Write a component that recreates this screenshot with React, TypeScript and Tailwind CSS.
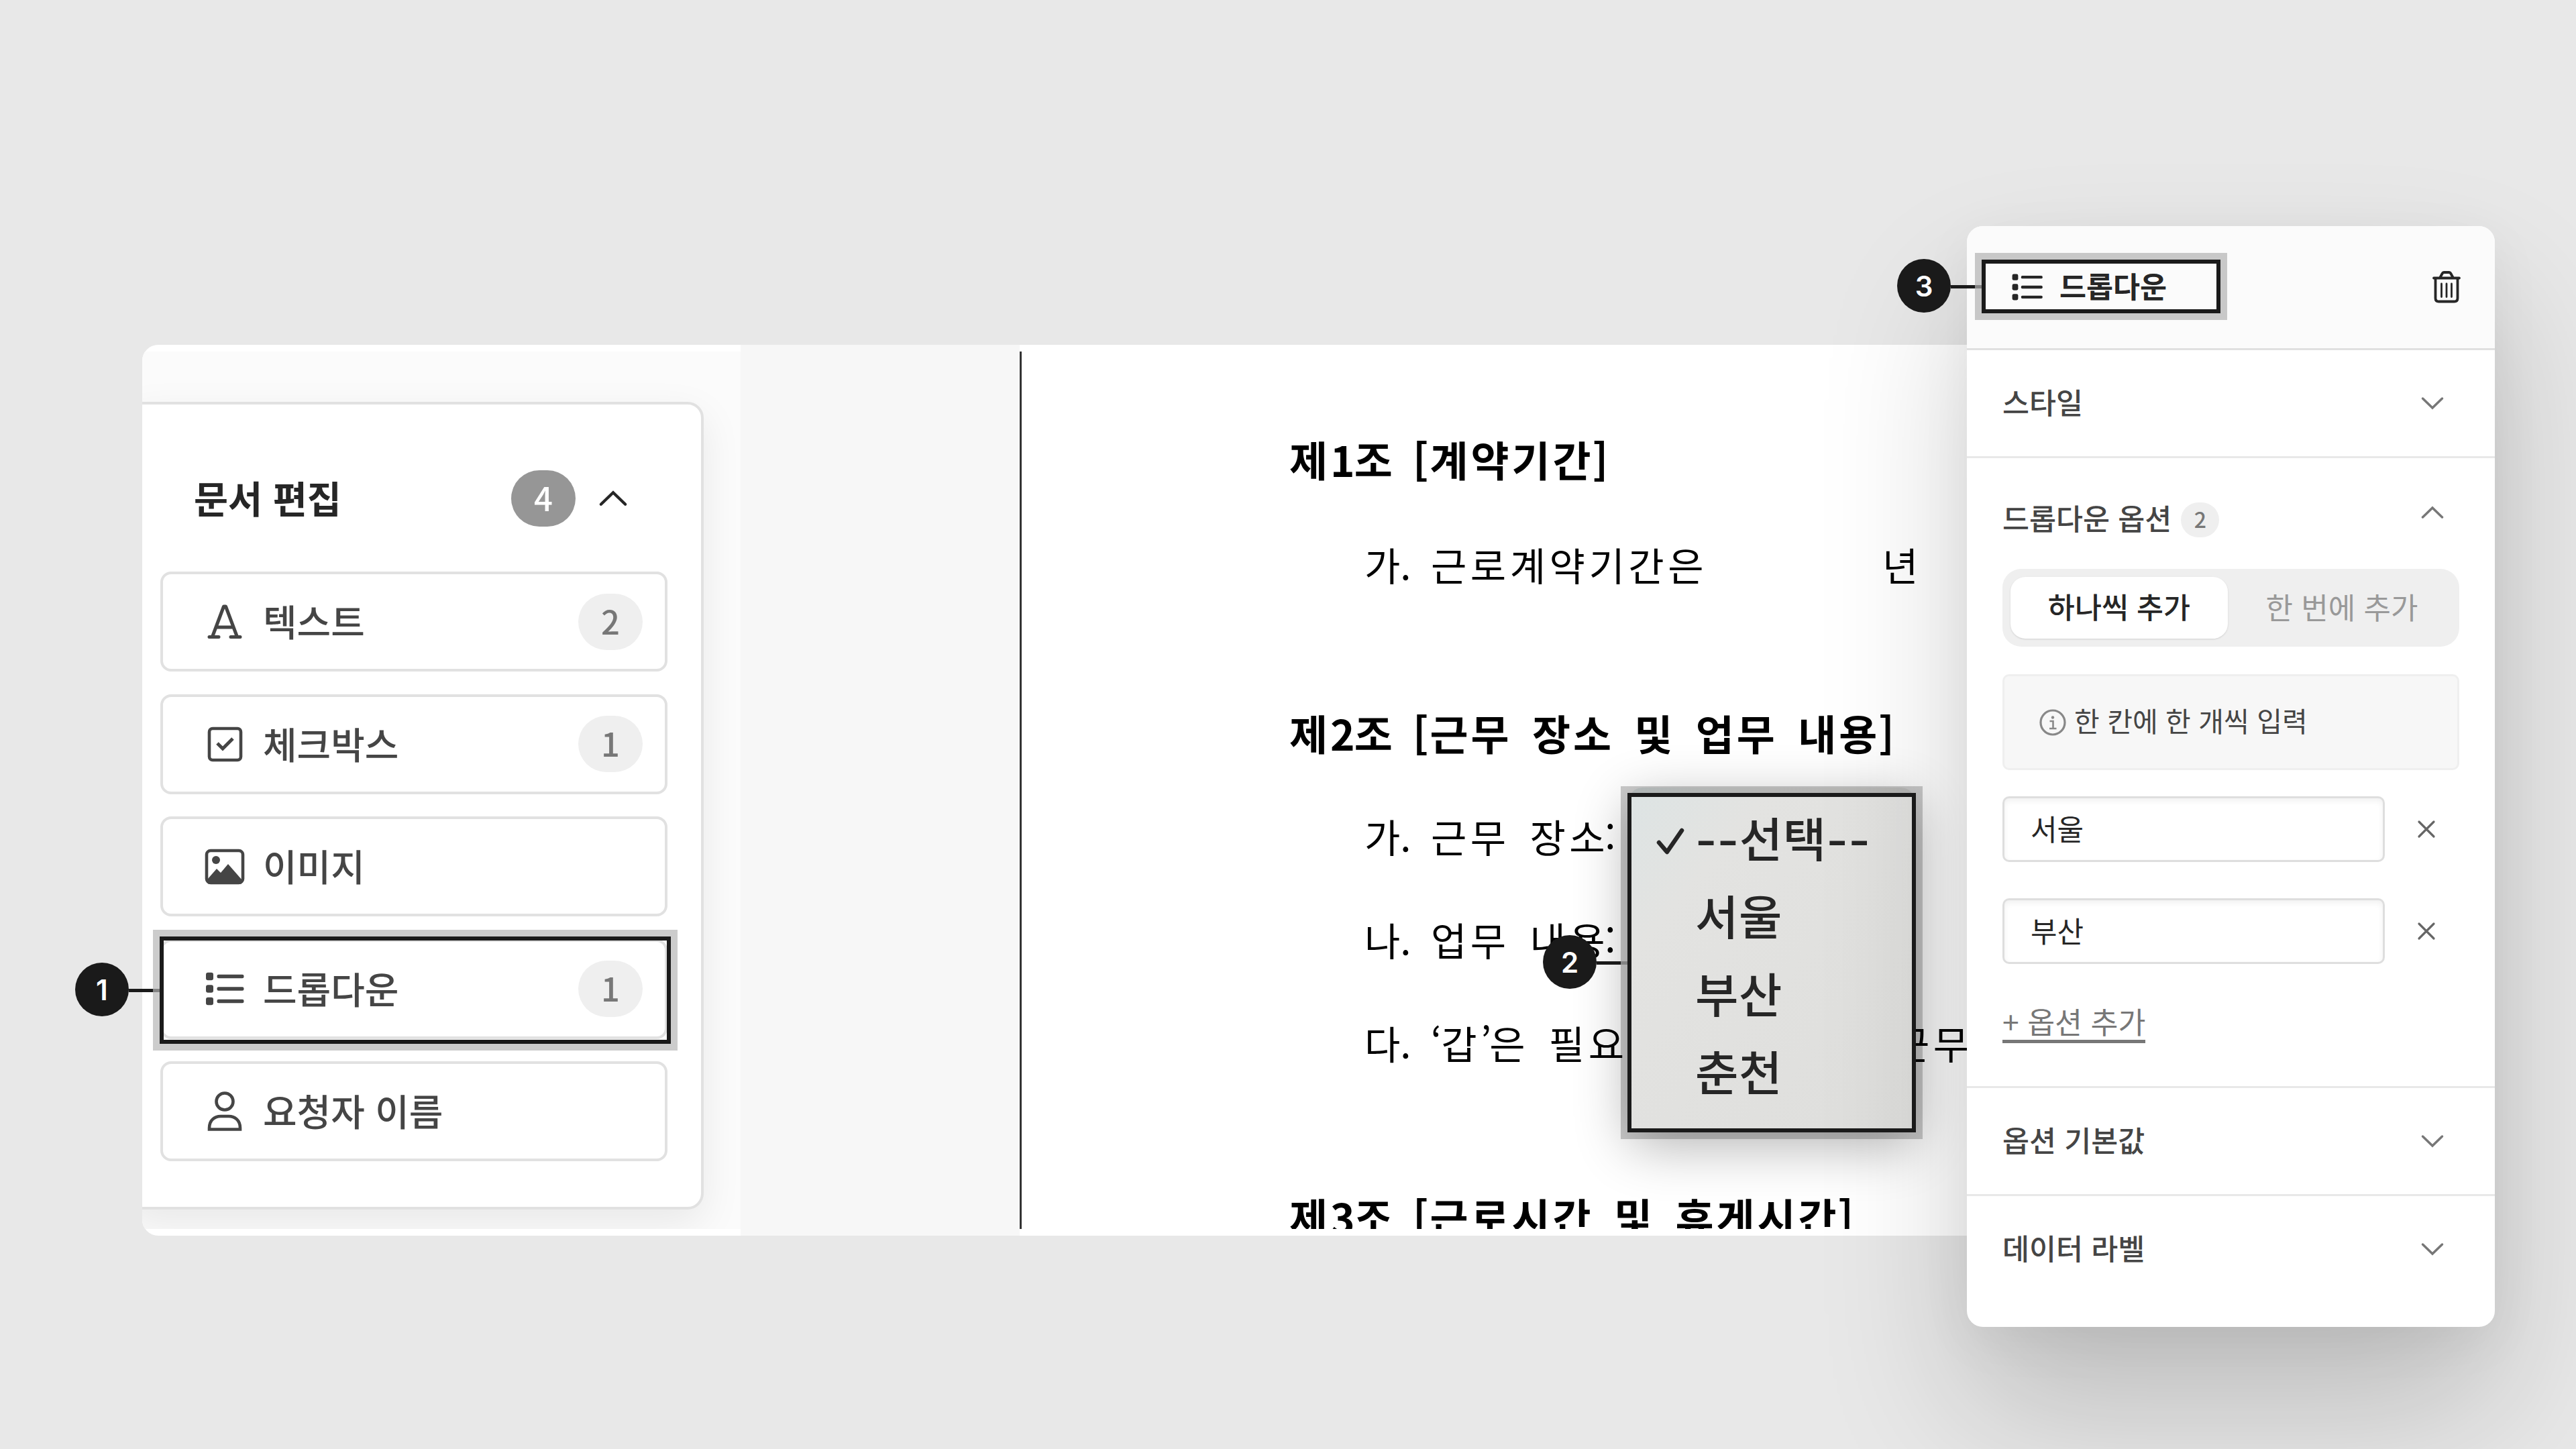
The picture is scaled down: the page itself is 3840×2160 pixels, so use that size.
import type { ReactNode } from 'react';
import clsx from 'clsx';

interface Field {
  label: string;
  icon: ReactNode;
  count?: number;
}

const TextIcon = () => (
  <svg width="56" height="56" viewBox="0 0 56 56" fill="none" stroke="currentColor">
    <path d="M10 49 26.500 5h3L46 49M15.500 36h25" strokeWidth="5" strokeLinejoin="round" />
    <path d="M5 50.500h14M37 50.500h14" strokeWidth="5" strokeLinecap="round" />
  </svg>
);

const CheckboxIcon = () => (
  <svg width="56" height="56" viewBox="0 0 56 56" fill="none" stroke="currentColor" strokeWidth="4.600">
    <rect x="5" y="5" width="47" height="47" rx="5" />
    <path d="m17 27 8 8 15-15" strokeWidth="5" />
  </svg>
);

const ImageIcon = () => (
  <svg width="60" height="56" viewBox="0 0 60 56" fill="none" stroke="currentColor" strokeWidth="4.600">
    <rect x="3" y="4" width="54" height="48" rx="6" />
    <circle cx="17" cy="18" r="6" fill="currentColor" stroke="none" />
    <path d="M4 47 18 31l6 6 11-13 21 24v3q0 3-4 3H8q-4 0-4-3z" fill="currentColor" stroke="none" />
  </svg>
);

const ListIcon = ({ size = 60 }: { size?: number }) => (
  <svg width={size} height={size} viewBox="0 0 60 60" fill="currentColor">
    {[11.5, 30, 48.5].map(y => (
      <g key={y}>
        <rect x="2" y={y - 5.8} width="11" height="11.600" rx="3" />
        <rect x="18.500" y={y - 2.7} width="40" height="5.400" rx="2.300" />
      </g>
    ))}
  </svg>
);

const UserIcon = () => (
  <svg width="56" height="62" viewBox="0 0 56 62" fill="none" stroke="currentColor" strokeWidth="4.600">
    <circle cx="28" cy="16" r="12.500" />
    <path d="M5 57.500v-2C5 44 13 38 22 38h12c9 0 17 6 17 17.500v2z" />
  </svg>
);

const TrashIcon = () => (
  <svg width="44" height="50" viewBox="0 0 44 50" fill="none" stroke="currentColor" strokeWidth="3.800" strokeLinecap="round">
    <path d="M3 11.500h38M12.500 10.500l3-5.500q1-2 3-2h7q2 0 3 2l3 5.500M5.500 12.500v29q0 5 5 5h23q5 0 5-5v-29" />
    <path d="M14.500 20v19.500M22 20v19.500M29.500 20v19.500" strokeWidth="2.800" />
  </svg>
);

const InfoIcon = () => (
  <svg width="40" height="40" viewBox="0 0 40 40" fill="none" stroke="currentColor" strokeWidth="3.200">
    <circle cx="20" cy="20" r="18" />
    <circle cx="20" cy="12.500" r="2.200" fill="currentColor" stroke="none" />
    <path d="M15.500 18H20.500v10.500M15 29h10.500" strokeWidth="2.600" />
  </svg>
);

const Chevron = ({ up, className }: { up?: boolean; className?: string }) => (
  <svg
    width="36"
    height="24"
    viewBox="0 0 36 24"
    fill="none"
    stroke="currentColor"
    strokeLinecap="round"
    className={clsx(up && 'rotate-180', className)}
  >
    <path d="m3.500 5 14.500 14L32.500 5" strokeWidth="3.500" />
  </svg>
);

const Cross = () => (
  <svg width="28" height="28" viewBox="0 0 28 28" fill="none" stroke="#666666" strokeWidth="3.200" strokeLinecap="round">
    <path d="m3 3 22 22M25 3 3 25" />
  </svg>
);

const fields: Field[] = [
  { label: '텍스트', icon: <TextIcon />, count: 2 },
  { label: '체크박스', icon: <CheckboxIcon />, count: 1 },
  { label: '이미지', icon: <ImageIcon /> },
  { label: '드롭다운', icon: <ListIcon />, count: 1 },
  { label: '요청자 이름', icon: <UserIcon /> },
];

const choices = ['--선택--', '서울', '부산', '춘천'];

const options = ['서울', '부산'];

export default function App() {
  return (
    <div
      lang="ko"
      className="relative h-[2160px] w-[3840px] overflow-hidden bg-[#e8e8e8] pt-[514px] pl-[212px] font-['Noto_Sans_CJK_KR',sans-serif]"
    >
      <div className="flex h-[1328px] w-[2800px] overflow-hidden rounded-l-3xl bg-white">
        <Sidebar />
        <div className="w-[416px] bg-[#f7f7f7]" />
        <Contract />
      </div>

      <Choices />
      <OptionPanel />

      {/* Step callouts */}
      <Callout step={1} badge="left-[112px] top-[1435px]" frame="left-[238px] top-[1396px] h-[160px] w-[762px]" />
      <Callout step={2} badge="left-[2300px] top-[1394px]" frame="left-[2426px] top-[1182px] h-[506px] w-[430px]" />
      <Callout step={3} badge="left-[2828px] top-[386px]" frame="left-[2954px] top-[387px] h-[80px] w-[356px]" />
    </div>
  );
}

const Sidebar = () => (
  <div className="w-[892px] py-[10px]">
    <div className="h-[1308px] overflow-hidden bg-[#fbfbfb] pt-[75px]">
      <div className="-ml-6 h-[1204px] w-[861px] rounded-3xl border-4 border-[#e1e1e1] bg-white pl-[47px] shadow-[0_20px_60px_rgba(0,0,0,0.08)]">
        <div className="flex h-[249px] items-center pt-[31px] pr-[107px] pl-[50px]">
          <h2 className="flex-1 pb-[2px] text-[55.500px] font-bold text-[#262626]">문서 편집</h2>
          <span className="flex h-[84px] w-[96px] items-center justify-center rounded-full bg-[#969696] pb-1 text-[49px] font-medium text-white">
            4
          </span>
          <Chevron up className="ml-8 h-[30px] w-[48px] text-[#262626]" />
        </div>
        <div className="flex flex-col gap-[33.500px]">
          {fields.map(f => (
            <div
              key={f.label}
              className="flex h-[149px] w-[756px] items-center rounded-2xl border-4 border-[#e1e1e1] bg-white pr-[33px] pl-[60px] text-[#454545]"
            >
              <span className="flex w-[64px] justify-center">{f.icon}</span>
              <span className="ml-[25px] flex-1 pb-1 text-[55px] font-medium">{f.label}</span>
              {f.count && (
                <span className="flex h-[84px] w-[96px] items-center justify-center rounded-full bg-[#efefef] pb-1 text-[49px] font-medium text-[#777777]">
                  {f.count}
                </span>
              )}
            </div>
          ))}
        </div>
      </div>
    </div>
  </div>
);

const Contract = () => (
  <div className="flex-1 py-[10px]">
    <div className="h-[1308px] overflow-hidden border-l-[3px] border-[#333333] pt-[110px] pl-[399px] text-black">
      <Clause no={1} title="계약기간" />
      <Item mark="가." className="mt-[57px]">
        <span className="w-[673px]">근로계약기간은</span>
        <span>년</span>
      </Item>
      <Clause no={2} title="근무 장소 및 업무 내용" className="mt-[151px]" />
      <Item mark="가." className="mt-[54px]">
        근무 장소<span className="-ml-[6px]">:</span>
      </Item>
      <Item mark="나." className="mt-[54px]">
        업무 내용<span className="-ml-[6px]">:</span>
      </Item>
      <Item mark="다." className="mt-[54px]">
        <span className="w-[690px]">
          <span className="-tracking-[1px]">‘</span>갑<span className="-tracking-[3px]">’</span>은 필요
        </span>
        <span>근무</span>
      </Item>
      <Clause no={3} title="근로시간 및 휴게시간" className="mt-[159px]" />
    </div>
  </div>
);

const Clause = ({ no, title, className }: { no: number; title: string; className?: string }) => (
  <h3 className={clsx('h-[100px] text-[62px] leading-[100px] font-bold tracking-[4px] whitespace-nowrap [word-spacing:9px]', className)}>
    제<span className="tracking-[-1px]">{no}</span>조 <span className="-ml-1 tracking-[2px]">[</span>
    {title}
    <span className="-ml-[2px]">]</span>
  </h3>
);

const Item = ({ mark, children, className }: { mark: string; children: ReactNode; className?: string }) => (
  <div className={clsx('ml-[112px] flex h-[100px] text-[58px] leading-[100px] tracking-[5.500px] whitespace-nowrap [word-spacing:8px]', className)}>
    <span className="w-[99px] tracking-normal">{mark}</span>
    {children}
  </div>
);

/* Native select menu opened over the document */
const Choices = () => (
  <div className="absolute top-[1174px] left-[2428px] h-[514px] w-[426px] rounded-[20px] bg-linear-to-br from-[#dde4e4] via-[#e3e3e1] via-25% to-[#dededc] pt-[20px] pl-[41px] font-[Inter,'Noto_Sans_CJK_KR',sans-serif] shadow-[0_20px_80px_rgba(0,0,0,0.3)]">
    {choices.map((c, i) => (
      <div key={c} className="flex h-[116px] items-center text-[70px] font-medium whitespace-nowrap text-[#262626]">
        <span className="w-[58px]">
          {i === 0 && (
            <svg width="42" height="44" viewBox="0 0 42 44" fill="none" stroke="currentColor" strokeWidth="6.500" strokeLinecap="round" strokeLinejoin="round">
              <path d="m4 26 12 14L38 8" />
            </svg>
          )}
        </span>
        <span className="tracking-[0.500px]">{c}</span>
      </div>
    ))}
  </div>
);

const OptionPanel = () => (
  <div className="absolute top-[337px] left-[2932px] h-[1641px] w-[787px] rounded-3xl bg-white text-[43.500px] font-medium text-[#454545] shadow-[0_120px_220px_rgba(0,0,0,0.19),0_20px_80px_rgba(0,0,0,0.05)]">
    <div className="flex h-[185px] items-center rounded-t-3xl border-b-[3px] border-[#e0e0e0] bg-[#fbfbfb] pr-[50px] pl-[66px] text-[#262626]">
      <ListIcon size={48} />
      <span className="ml-[24px] flex-1 pb-1 font-bold">드롭다운</span>
      <TrashIcon />
    </div>

    <Section label="스타일" />

    <div className="h-[939px] border-b-[3px] border-[#e8e8e8] px-[53px] pt-[60px]">
      <div className="flex h-[64px] items-center pr-[22px]">
        <span className="pb-[6px]">드롭다운 옵션</span>
        <span className="mr-auto ml-[14px] flex h-[52px] w-[57px] items-center justify-center rounded-full bg-[#efefef] pb-1 text-[32px] text-[#777777]">
          2
        </span>
        <Chevron up className="mb-[22px] text-[#777777]" />
      </div>

      <div className="mt-[41px] flex h-[116px] w-[681px] rounded-[28px] bg-[#efefef] p-[12px]">
        <div className="flex w-[324px] items-center justify-center rounded-[22px] bg-white pb-1 text-[#262626] shadow-sm">하나씩 추가</div>
        <div className="flex flex-1 items-center justify-center pb-1 pl-[7px] text-[44px] font-normal text-[#999999]">한 번에 추가</div>
      </div>

      <div className="mt-[41px] flex h-[143px] w-[681px] items-center rounded-[10px] border-[3px] border-[#efefef] bg-[#f7f7f7] pl-[52px] text-[41px] font-normal">
        <span className="text-[#888888]">
          <InfoIcon />
        </span>
        <span className="ml-[12px] pb-[6px]">한 칸에 한 개씩 입력</span>
      </div>

      <div className="mt-[39px] flex flex-col gap-[54px]">
        {options.map(o => (
          <div key={o} className="flex items-center">
            <div className="flex h-[98px] w-[570px] items-center rounded-[10px] border-[3px] border-[#dedede] pb-1 pl-[39px] text-[43px] font-normal text-[#262626] shadow-[inset_0_4px_8px_rgba(0,0,0,0.06)]">
              {o}
            </div>
            <span className="ml-[48px]">
              <Cross />
            </span>
          </div>
        ))}
      </div>

      <div className="mt-[50px] flex">
        <span className="h-[68px] border-b-[5px] border-[#777777] text-[44.500px] leading-[69px] font-normal text-[#777777]">+ 옵션 추가</span>
      </div>
    </div>

    <Section label="옵션 기본값" />
    <Section label="데이터 라벨" last />
  </div>
);

const Section = ({ label, last }: { label: string; last?: boolean }) => (
  <div className={clsx('flex h-[161px] items-center justify-between pr-[75px] pl-[53px]', last ? 'pb-[4px]' : 'border-b-[3px] border-[#e8e8e8]')}>
    <span className="pb-[4px]">{label}</span>
    <Chevron className="text-[#777777]" />
  </div>
);

const Callout = ({ step, badge, frame }: { step: number; badge: string; frame: string }) => (
  <>
    <div className={clsx('absolute border-[6px] border-[#1a1a1a] shadow-[0_0_0_10px_rgba(0,0,0,0.2)]', frame)} />
    <div className={clsx('absolute flex items-center', badge)}>
      <span className="flex size-20 items-center justify-center rounded-full bg-[#1a1a1a] font-[Inter] text-[42px] font-semibold text-white">
        {step}
      </span>
      <span className="mt-[3px] h-[5px] w-[36px] bg-[#1a1a1a]" />
      <span className="mt-[3px] h-[5px] w-[10px] bg-[#848484]" />
    </div>
  </>
);
